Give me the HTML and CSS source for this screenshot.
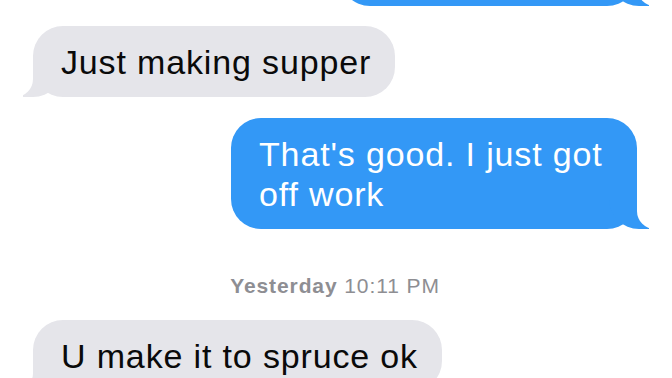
FILE: index.html
```html
<!DOCTYPE html>
<html lang="en">
<head>
    <meta charset="UTF-8">
    <meta name="viewport" content="width=device-width, initial-scale=1.0">
    <title>Messages</title>
    <link rel="stylesheet" href="styles.css">
</head>
<body>
    <div class="thread">
        <div class="bubble sent stub"></div>

        <div class="bubble received">Just making supper</div>

        <div class="bubble sent">That's good. I just got off work</div>

        <div class="timestamp"><strong>Yesterday</strong> 10:11 PM</div>

        <div class="bubble received">U make it to spruce ok</div>
    </div>
</body>
</html>
```

FILE: styles.css
```css
* {
    margin: 0;
    padding: 0;
    box-sizing: border-box;
}

body {
    background-color: #fff;
    font-family: "Liberation Sans", Arial, sans-serif;
    overflow: hidden;
    height: 378px;
}

/* Conversation column */
.thread {
    display: flex;
    flex-direction: column;
    padding: 0 35px 0 33px;
}

/* Message bubbles */
.bubble {
    position: relative;
    z-index: 0;
    padding: 16px 24px 15px 28px;
    border-radius: 30px;
    font-size: 34px;
    line-height: 40px;
    letter-spacing: 0.85px;
}

.bubble::before,
.bubble::after {
    content: "";
    position: absolute;
    z-index: -1;
    bottom: 0;
    height: 36px;
}

.received {
    align-self: flex-start;
    max-width: 460px;
    background-color: #e5e5ea;
    color: #0a0a0a;
    margin-top: 20px;
}

.received::before {
    left: -10px;
    width: 40px;
    background-color: #e5e5ea;
    border-bottom-right-radius: 30px;
}

.received::after {
    left: -40px;
    width: 40px;
    background-color: #fff;
    border-bottom-right-radius: 18px;
}

.sent {
    align-self: flex-end;
    max-width: 406px;
    background-color: #3398f6;
    color: #fff;
    margin-top: 21px;
}

.sent::before {
    right: -12px;
    width: 40px;
    background-color: #3398f6;
    border-bottom-left-radius: 30px;
}

.sent::after {
    right: -40px;
    width: 40px;
    background-color: #fff;
    border-bottom-left-radius: 18px;
}

/* bubble scrolled mostly out of view */
.stub {
    width: 297px;
    height: 66px;
    margin-top: -60px;
    padding: 0;
}

.timestamp {
    margin-top: 44px;
    text-align: center;
    font-size: 21px;
    line-height: 25px;
    letter-spacing: 0.9px;
    color: #8e8e93;
}

.timestamp strong {
    font-weight: bold;
}

.timestamp + .received {
    margin-top: 22px;
}
```
